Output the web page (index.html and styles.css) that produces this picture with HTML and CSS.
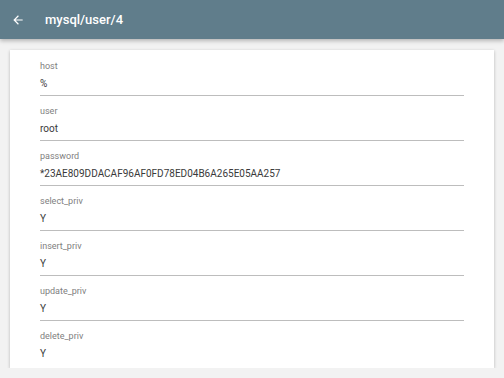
FILE: index.html
```html
<!DOCTYPE html>
<html>
<head>
<meta charset="utf-8">
<link rel="stylesheet" href="styles.css">
</head>
<body>
<header class="bar">
  <svg class="back" width="14" height="14" viewBox="0 0 24 24"><path d="M20 11H7.83l5.59-5.59L12 4l-8 8 8 8 1.41-1.41L7.83 13H20v-2z" fill="#fff"/></svg>
  <span class="title">mysql/user/4</span>
</header>
<main class="card">
  <div class="field"><div class="label">host</div><div class="value">%</div></div>
  <div class="field"><div class="label">user</div><div class="value">root</div></div>
  <div class="field"><div class="label">password</div><div class="value">*23AE809DDACAF96AF0FD78ED04B6A265E05AA257</div></div>
  <div class="field"><div class="label">select_priv</div><div class="value">Y</div></div>
  <div class="field"><div class="label">insert_priv</div><div class="value">Y</div></div>
  <div class="field"><div class="label">update_priv</div><div class="value">Y</div></div>
  <div class="field last"><div class="label">delete_priv</div><div class="value">Y</div></div>
</main>
</body>
</html>
```
FILE: styles.css
```css
html, body { margin: 0; padding: 0; }
body {
  background: #f2f2f2;
  font-family: Roboto, "Liberation Sans", sans-serif;
}
.bar {
  height: 39px;
  background: #607d8b;
  display: flex;
  align-items: center;
  padding-left: 11px;
  box-shadow: 0 2px 4px rgba(0,0,0,0.25);
  position: relative;
}
.back { display: block; }
.title {
  color: #fff;
  font-size: 13px;
  font-weight: 500;
  margin-left: 20px;
}
.card {
  margin: 11px 10px 0 10px;
  background: #fff;
  padding: 1px 30px 3px 30px;
  box-shadow: 0 1px 3px rgba(0,0,0,0.25);
}
.field {
  padding: 9px 0 4px 0;
  border-bottom: 1px solid #bdbdbd;
}
.field.last { border-bottom: none; }
.label {
  font-size: 9px;
  line-height: 12px;
  color: #808080;
  margin-bottom: 4px;
}
.value {
  font-size: 10px;
  line-height: 15px;
  color: #3a3a3a;
}
```
